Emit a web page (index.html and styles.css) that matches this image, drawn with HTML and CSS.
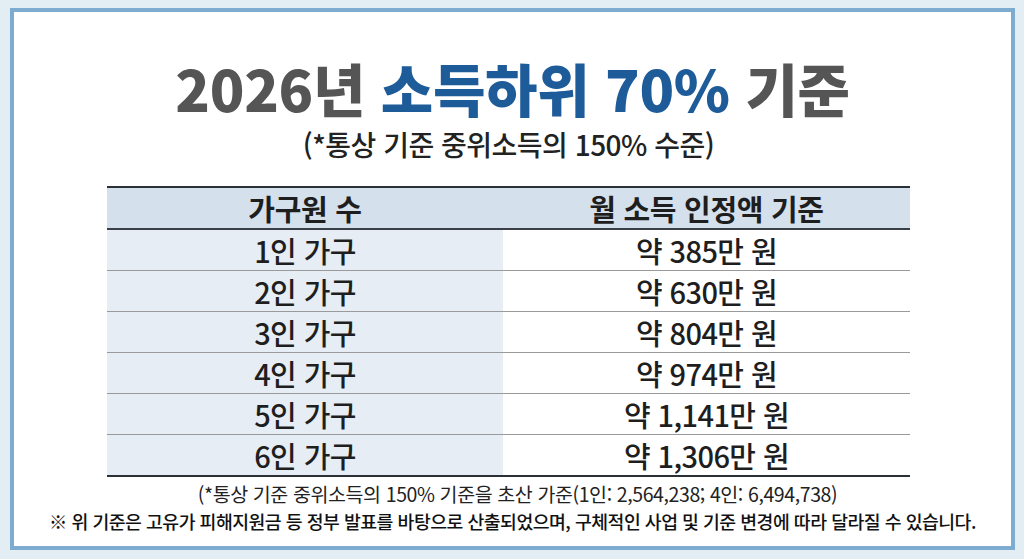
FILE: index.html
```html
<!DOCTYPE html>
<html lang="ko">
<head>
<meta charset="utf-8">
<link rel="stylesheet" href="styles.css">
</head>
<body>
<div class="card">
  <h1 class="title"><span class="gray">2026년</span> <span class="blue">소득하위 70%</span> <span class="gray">기준</span></h1>
  <p class="subtitle">(*통상 기준 중위소득의 150% 수준)</p>
  <table class="tbl">
    <thead>
      <tr><th class="c1">가구원 수</th><th class="c2">월 소득 인정액 기준</th></tr>
    </thead>
    <tbody>
      <tr><td class="c1">1인 가구</td><td class="c2">약 385만 원</td></tr>
      <tr><td class="c1">2인 가구</td><td class="c2">약 630만 원</td></tr>
      <tr><td class="c1">3인 가구</td><td class="c2">약 804만 원</td></tr>
      <tr><td class="c1">4인 가구</td><td class="c2">약 974만 원</td></tr>
      <tr><td class="c1">5인 가구</td><td class="c2">약 1,141만 원</td></tr>
      <tr><td class="c1">6인 가구</td><td class="c2">약 1,306만 원</td></tr>
    </tbody>
  </table>
  <p class="note">(*통상 기준 중위소득의 150% 기준을 초산 가준(1인: 2,564,238; 4인: 6,494,738)</p>
  <p class="note2">※ 위 기준은 고유가 피해지원금 등 정부 발표를 바탕으로 산출되었으며, 구체적인 사업 및 기준 변경에 따라 달라질 수 있습니다.</p>
</div>
</body>
</html>
```

FILE: styles.css
```css
html, body {
  margin: 0;
  padding: 0;
}
body {
  background: #e3eef4;
  width: 1024px;
  height: 559px;
  overflow: hidden;
  font-family: "Noto Sans CJK KR", "Noto Sans", sans-serif;
  padding: 8px 9px 0 10px;
  box-sizing: border-box;
}
.card {
  box-sizing: border-box;
  height: 542px;
  background: #ffffff;
  border: 4px solid #7eabd0;
  padding-top: 43px;
  display: flex;
  flex-direction: column;
}
.title {
  margin: 0;
  text-align: center;
  font-size: 57px;
  font-weight: 900;
  line-height: 64px;
  letter-spacing: -0.3px;
}
.gray { color: #555555; }
.blue { color: #1d5b99; }
.subtitle {
  margin: 6px 0 0;
  text-align: center;
  font-size: 28px;
  font-weight: 500;
  line-height: 38px;
  color: #222222;
  padding-right: 8px;
  letter-spacing: -0.5px;
}
.tbl {
  margin: 23px 0 0 93px;
  width: 803px;
  border-collapse: collapse;
  font-size: 29px;
  color: #1e1e1e;
}
.tbl th, .tbl td {
  text-align: center;
  padding: 0;
  letter-spacing: -0.6px;
}
.tbl thead th {
  background: #d4e1ed;
  height: 40px;
  font-size: 29px;
  font-weight: 700;
  border-top: 2px solid #2b2f36;
  border-bottom: 2px solid #3a3f47;
  line-height: 40px;
  letter-spacing: -0.3px;
}
.tbl td {
  height: 40px;
  line-height: 40px;
  font-weight: 500;
  border-bottom: 1px solid #9a9a9a;
}
.tbl td.c1 { background: #e6edf4; }
.tbl td.c2 { background: #ffffff; }
.tbl tbody tr:last-child td { border-bottom: 2px solid #2b2f36; }
.c1 { width: 396px; }
.note {
  margin: 3px 0 0;
  text-align: center;
  font-size: 19.5px;
  line-height: 28px;
  color: #222222;
  letter-spacing: -0.4px;
  padding-left: 10px;
}
.note2 {
  margin: 0;
  text-align: center;
  font-size: 18.3px;
  font-weight: 500;
  line-height: 26px;
  color: #111111;
  letter-spacing: -0.5px;
}
```
